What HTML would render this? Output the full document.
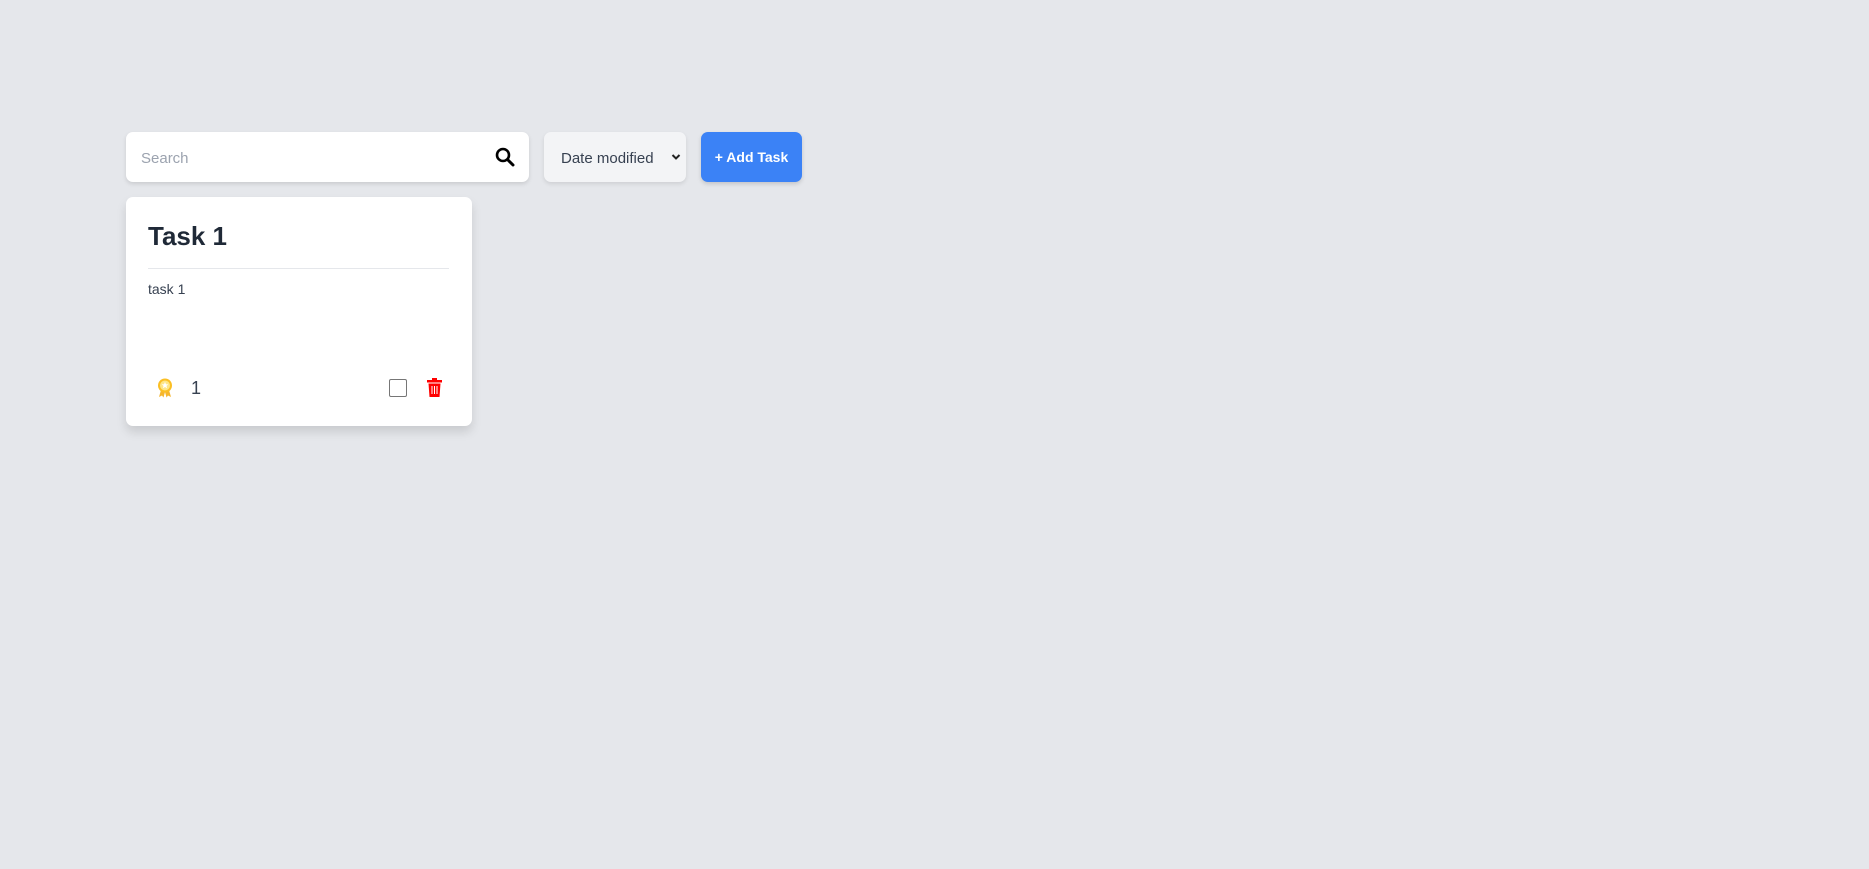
<!DOCTYPE html>
<html><head><meta charset="utf-8"><style>
*{box-sizing:border-box;margin:0;padding:0}
body{width:1869px;height:869px;background:#e5e7eb;font-family:"Liberation Sans",sans-serif;position:relative;overflow:hidden}
.abs{position:absolute}
.search{left:126px;top:132px;width:403px;height:50px;background:#fff;border-radius:7px;box-shadow:0 2px 4px rgba(0,0,0,.12)}
.search span{position:absolute;left:15px;top:18px;font-size:15px;color:#9ca3af}
.sel{left:544px;top:132px;width:142px;height:50px;background:#f3f4f6;border-radius:7px;box-shadow:0 2px 4px rgba(0,0,0,.1)}
.sel span{position:absolute;left:17px;top:18px;font-size:15px;color:#374151}
.btn{left:701px;top:132px;width:101px;height:50px;background:#3b82f6;border-radius:7px;box-shadow:0 2px 4px rgba(0,0,0,.15);color:#fff;font-weight:bold;font-size:14px;line-height:50px;text-align:center}
.card{left:126px;top:197px;width:346px;height:229px;background:#fff;border-radius:7px;box-shadow:0 6px 10px rgba(0,0,0,.12)}
.title{left:22px;top:24px;font-size:26px;font-weight:bold;color:#1f2937}
.hr{left:22px;top:71px;width:301px;height:1px;background:#e5e7eb}
.desc{left:22px;top:84px;font-size:14px;color:#374151}
</style></head><body>
<div class="abs search"><span>Search</span>
<svg class="abs" style="left:369px;top:15px" width="20" height="20" viewBox="0 0 20 20"><circle cx="8" cy="8" r="6" fill="none" stroke="#000" stroke-width="2.6"/><path d="M12.5 12.5L18 18" stroke="#000" stroke-width="3" stroke-linecap="round"/></svg></div>
<div class="abs sel"><span>Date modified</span>
<svg class="abs" style="left:127px;top:21px" width="10" height="8" viewBox="0 0 10 8"><path d="M1.5 2L5 5.5 8.5 2" fill="none" stroke="#222" stroke-width="2"/></svg></div>
<div class="abs btn">+ Add Task</div>
<div class="abs card">
<div class="abs title">Task 1</div>
<div class="abs hr"></div>
<div class="abs desc">task 1</div>
<svg class="abs" style="left:31px;top:181px" width="16" height="20" viewBox="0 0 16 20"><path d="M4 12L2 19 5 17.5 6.5 19.5 8 14 9.5 19.5 11 17.5 14 19 12 12Z" fill="#f5b62e"/><circle cx="8" cy="7.5" r="7" fill="#fbbf24"/><circle cx="8" cy="7.5" r="5" fill="#fde68a"/><path d="M8 4l1 2.2 2.3.2-1.8 1.5.6 2.3L8 9l-2.1 1.2.6-2.3-1.8-1.5 2.3-.2z" fill="#fff"/></svg>
<div class="abs" style="left:65px;top:181px;font-size:18px;color:#374151">1</div>
<div class="abs" style="left:263px;top:182px;width:18px;height:18px;border:1.5px solid #767676;border-radius:2px"></div>
<svg class="abs" style="left:301px;top:181px" width="15" height="19" viewBox="0 0 15 19"><rect x="5" y="0" width="5" height="2" fill="#f00"/><rect x="0" y="2" width="15" height="2.5" fill="#f00"/><path d="M1.5 5.5h12l-1 13.5h-10z" fill="#f00"/><path d="M5 8v8M7.5 8v8M10 8v8" stroke="#fff" stroke-width="1"/></svg>
</div>
</body></html>
